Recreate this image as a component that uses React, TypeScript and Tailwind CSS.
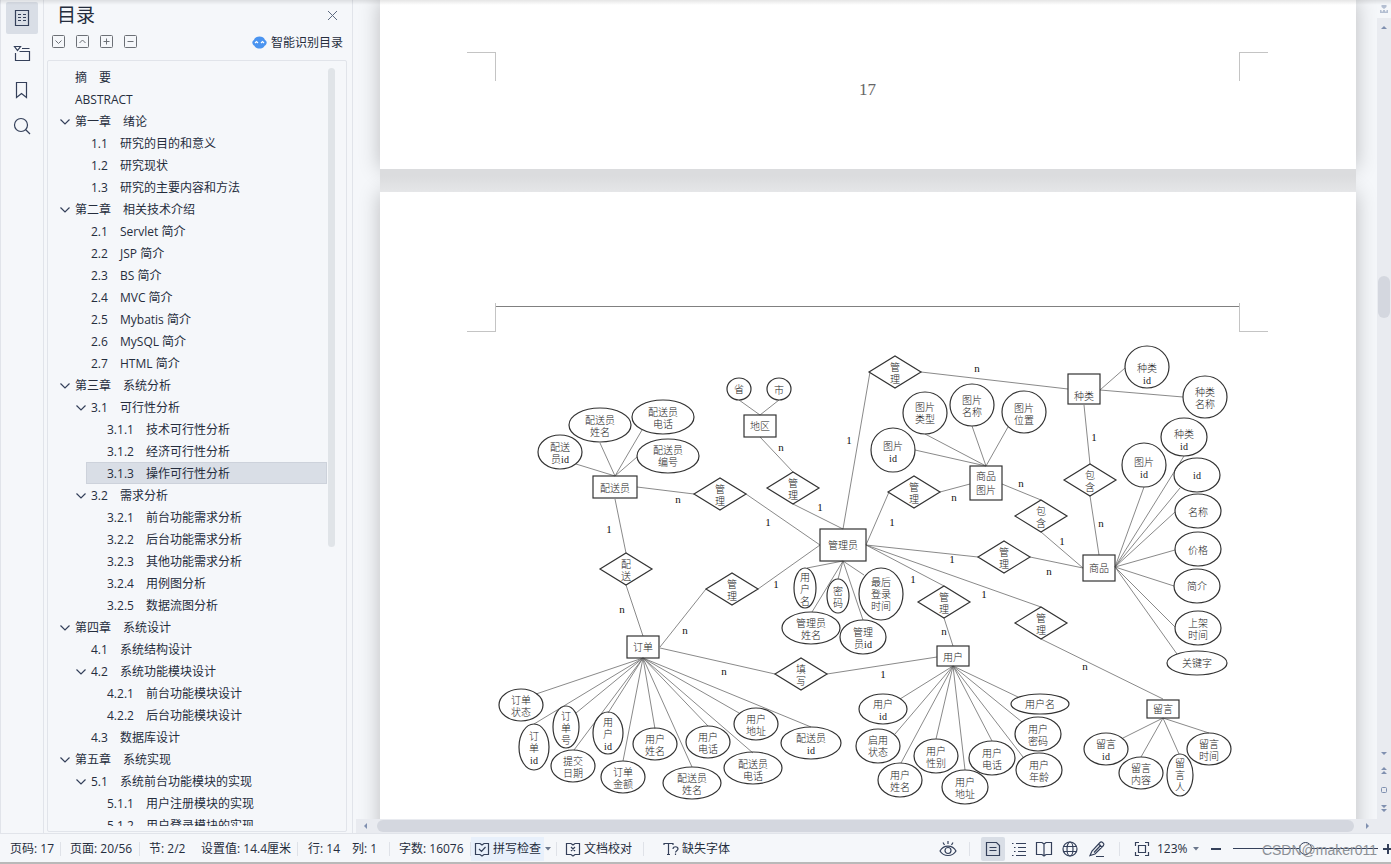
import { useState } from "react"
import type { ReactNode } from "react"

type TocItem = {
  level: number
  no: string
  title: string
  open?: boolean
}

type Shape = {
  kind: 'ellipse' | 'rect' | 'diamond'
  x: number
  y: number
  rx: number
  ry: number
  lines: string[]
  textY: number
}

const toc: TocItem[] = [
  { level: 0, no: '', title: '摘　要' },
  { level: 0, no: '', title: 'ABSTRACT' },
  { level: 0, no: '第一章', title: '绪论', open: true },
  { level: 1, no: '1.1', title: '研究的目的和意义' },
  { level: 1, no: '1.2', title: '研究现状' },
  { level: 1, no: '1.3', title: '研究的主要内容和方法' },
  { level: 0, no: '第二章', title: '相关技术介绍', open: true },
  { level: 1, no: '2.1', title: 'Servlet 简介' },
  { level: 1, no: '2.2', title: 'JSP 简介' },
  { level: 1, no: '2.3', title: 'BS 简介' },
  { level: 1, no: '2.4', title: 'MVC 简介' },
  { level: 1, no: '2.5', title: 'Mybatis 简介' },
  { level: 1, no: '2.6', title: 'MySQL 简介' },
  { level: 1, no: '2.7', title: 'HTML 简介' },
  { level: 0, no: '第三章', title: '系统分析', open: true },
  { level: 1, no: '3.1', title: '可行性分析', open: true },
  { level: 2, no: '3.1.1', title: '技术可行性分析' },
  { level: 2, no: '3.1.2', title: '经济可行性分析' },
  { level: 2, no: '3.1.3', title: '操作可行性分析' },
  { level: 1, no: '3.2', title: '需求分析', open: true },
  { level: 2, no: '3.2.1', title: '前台功能需求分析' },
  { level: 2, no: '3.2.2', title: '后台功能需求分析' },
  { level: 2, no: '3.2.3', title: '其他功能需求分析' },
  { level: 2, no: '3.2.4', title: '用例图分析' },
  { level: 2, no: '3.2.5', title: '数据流图分析' },
  { level: 0, no: '第四章', title: '系统设计', open: true },
  { level: 1, no: '4.1', title: '系统结构设计' },
  { level: 1, no: '4.2', title: '系统功能模块设计', open: true },
  { level: 2, no: '4.2.1', title: '前台功能模块设计' },
  { level: 2, no: '4.2.2', title: '后台功能模块设计' },
  { level: 1, no: '4.3', title: '数据库设计' },
  { level: 0, no: '第五章', title: '系统实现', open: true },
  { level: 1, no: '5.1', title: '系统前台功能模块的实现', open: true },
  { level: 2, no: '5.1.1', title: '用户注册模块的实现' },
  { level: 2, no: '5.1.2', title: '用户登录模块的实现' },
]

const indent = ['ml-[6px]', 'ml-[22px]', 'ml-[38px]']
const numberWidth = ['w-[48px]', 'w-[29px]', 'w-[39px]']

function el(x: number, y: number, rx: number, ry: number, text: string, textY: number): Shape {
  return { kind: 'ellipse', x, y, rx, ry, lines: text.split('/'), textY }
}

function box(x: number, y: number, rx: number, ry: number, text: string, textY: number): Shape {
  return { kind: 'rect', x, y, rx, ry, lines: text.split('/'), textY }
}

function dia(x: number, y: number, text: string): Shape {
  return { kind: 'diamond', x, y, rx: 26, ry: 16, lines: text.split('/'), textY: y - 5 }
}

const shapes: Shape[] = [
  // 配送员
  el(560, 452, 22, 17, '配送/员id', 447),
  el(600, 425, 31, 17, '配送员/姓名', 420),
  el(663, 417, 31, 17, '配送员/电话', 412),
  el(668, 456, 31, 17, '配送员/编号', 450),
  box(615, 487, 22, 11, '配送员', 488),
  // 地区
  el(739, 389, 12, 11, '省', 389),
  el(779, 389, 12, 11, '市', 390),
  box(760, 426, 16, 11, '地区', 426),
  // 商品图片
  el(925, 413, 22, 21, '图片/类型', 407),
  el(972, 405, 22, 21, '图片/名称', 400),
  el(1024, 412, 22, 21, '图片/位置', 408),
  el(893, 450, 22, 22, '图片/id', 446),
  box(986, 483, 16, 17, '商品/图片', 476),
  // 种类
  el(1147, 367, 22, 21, '种类/id', 368),
  el(1205, 397, 22, 21, '种类/名称', 392),
  box(1084, 389, 16, 15, '种类', 396),
  // 商品
  el(1184, 437, 23, 19, '种类/id', 434),
  el(1144, 465, 22, 22, '图片/id', 462),
  el(1197, 475, 23, 17, 'id', 475),
  el(1198, 511, 23, 17, '名称', 512),
  el(1198, 549, 23, 17, '价格', 550),
  el(1197, 586, 23, 17, '简介', 586),
  el(1198, 628, 23, 17, '上架/时间', 623),
  el(1197, 663, 30, 12, '关键字', 663),
  box(1099, 568, 16, 13, '商品', 568),
  // 管理员
  box(843, 545, 23, 16, '管理员', 545),
  el(805, 588, 11, 20, '用/户/名', 577),
  el(838, 596, 11, 17, '密/码', 591),
  el(881, 594, 22, 26, '最后/登录/时间', 582),
  el(811, 628, 29, 16, '管理员/姓名', 623),
  el(863, 637, 23, 17, '管理/员id', 632),
  // 订单
  box(643, 647, 16, 11, '订单', 647),
  el(521, 705, 22, 16, '订单/状态', 700),
  el(534, 747, 15, 23, '订/单/id', 736),
  el(566, 727, 13, 21, '订/单/号', 716),
  el(573, 766, 22, 16, '提交/日期', 761),
  el(608, 733, 15, 21, '用/户/id', 722),
  el(623, 777, 22, 16, '订单/金额', 772),
  el(655, 744, 22, 16, '用户/姓名', 739),
  el(692, 783, 29, 16, '配送员/姓名', 778),
  el(708, 742, 22, 16, '用户/电话', 737),
  el(753, 768, 29, 16, '配送员/电话', 764),
  el(756, 724, 22, 16, '用户/地址', 719),
  el(811, 743, 30, 16, '配送员/id', 738),
  // 用户
  box(953, 656, 16, 10, '用户', 657),
  el(883, 709, 24, 15, '用户/id', 704),
  el(878, 746, 22, 17, '启用/状态', 740),
  el(900, 780, 22, 17, '用户/姓名', 775),
  el(936, 756, 22, 17, '用户/性别', 751),
  el(965, 787, 23, 17, '用户/地址', 782),
  el(992, 758, 23, 17, '用户/电话', 753),
  el(1040, 704, 29, 10, '用户名', 704),
  el(1038, 734, 23, 17, '用户/密码', 729),
  el(1039, 770, 23, 17, '用户/年龄', 765),
  // 留言
  box(1163, 709, 16, 9, '留言', 709),
  el(1106, 749, 22, 16, '留言/id', 744),
  el(1141, 773, 22, 16, '留言/内容', 768),
  el(1180, 775, 13, 21, '留/言/人', 763),
  el(1209, 749, 22, 16, '留言/时间', 744),
  // 联系
  dia(895, 372, '管/理'),
  dia(720, 494, '管/理'),
  dia(793, 488, '管/理'),
  dia(914, 492, '管/理'),
  dia(1041, 516, '包/含'),
  dia(1090, 480, '包/含'),
  dia(1004, 557, '管/理'),
  dia(944, 602, '管/理'),
  dia(1041, 623, '管/理'),
  dia(732, 589, '管/理'),
  dia(626, 569, '配/送'),
  dia(801, 674, '填/写'),
]

// x1, y1, x2, y2
const links = [
  [576, 464, 615, 476], [600, 443, 615, 476], [642, 430, 615, 476], [637, 457, 615, 476],
  [739, 400, 760, 415], [779, 400, 760, 415], [760, 437, 793, 472], [793, 504, 843, 529],
  [637, 487, 694, 494], [615, 499, 626, 553], [746, 494, 820, 545], [626, 585, 643, 636],
  [870, 372, 843, 529], [921, 372, 1068, 389],
  [925, 434, 986, 466], [972, 426, 986, 466], [1008, 427, 986, 466], [915, 450, 986, 466],
  [940, 492, 970, 484], [889, 492, 866, 545], [1002, 484, 1041, 500], [1041, 532, 1083, 568],
  [1084, 405, 1090, 464], [1090, 496, 1099, 555], [1100, 390, 1125, 368], [1100, 390, 1183, 397],
  [1115, 567, 1144, 487], [1115, 567, 1184, 456], [1115, 567, 1180, 488], [1115, 567, 1175, 512],
  [1115, 567, 1175, 550], [1115, 567, 1174, 586], [1115, 567, 1175, 627], [1115, 567, 1177, 654],
  [866, 545, 978, 557], [1030, 557, 1083, 568], [866, 545, 944, 586], [866, 545, 1041, 607],
  [944, 618, 953, 646], [1041, 639, 1163, 699],
  [843, 561, 807, 568], [843, 561, 812, 612], [843, 561, 838, 579], [843, 561, 863, 620], [843, 561, 864, 575],
  [820, 545, 758, 589], [706, 589, 660, 647], [660, 648, 775, 674], [827, 674, 937, 657],
  [643, 658, 536, 694], [643, 658, 534, 724], [643, 658, 576, 713], [643, 658, 574, 750],
  [643, 658, 608, 713], [643, 658, 623, 761], [643, 658, 655, 729], [643, 658, 692, 767],
  [643, 658, 708, 726], [643, 658, 753, 753], [643, 658, 739, 713], [643, 658, 811, 727],
  [953, 666, 900, 699], [953, 666, 895, 734], [953, 666, 901, 763], [953, 666, 936, 739],
  [953, 666, 965, 770], [953, 666, 992, 741], [953, 666, 1023, 757], [953, 666, 1022, 722],
  [953, 666, 1018, 697],
  [1163, 718, 1123, 738], [1163, 718, 1141, 757], [1163, 718, 1179, 754], [1163, 718, 1209, 733],
]

const cardinals: [string, number, number][] = [
  ['n', 678, 500], ['1', 768, 523], ['1', 609, 530], ['n', 781, 448], ['1', 820, 508],
  ['1', 849, 441], ['n', 977, 369], ['1', 892, 523], ['n', 954, 498], ['n', 1021, 484],
  ['1', 1094, 438], ['n', 1101, 524], ['1', 1062, 542], ['n', 1049, 572], ['n', 1085, 667],
  ['1', 952, 560], ['1', 913, 580], ['1', 984, 595], ['n', 944, 632], ['1', 883, 675],
  ['1', 776, 585], ['n', 622, 610], ['n', 685, 631], ['n', 724, 672],
]

function ErDiagram() {
  return (
    <svg viewBox="380 332 976 520" className="block w-full font-['Liberation_Serif','Noto_Sans_CJK_SC',serif]" role="img" aria-label="E-R图">
      <g stroke="#6b6b6b" strokeWidth="0.8">
        {links.map(([x1, y1, x2, y2], i) => <line key={i} x1={x1} y1={y1} x2={x2} y2={y2} />)}
      </g>
      <g fill="none" stroke="#333" strokeWidth="1.2">
        {shapes.map((s, i) => {
          if (s.kind === 'ellipse') {
            return <ellipse key={i} cx={s.x} cy={s.y} rx={s.rx} ry={s.ry} />
          }
          if (s.kind === 'rect') {
            return <rect key={i} x={s.x - s.rx} y={s.y - s.ry} width={s.rx * 2} height={s.ry * 2} />
          }
          return <path key={i} d={`M${s.x - s.rx} ${s.y}L${s.x} ${s.y - s.ry}L${s.x + s.rx} ${s.y}L${s.x} ${s.y + s.ry}Z`} />
        })}
      </g>
      <g fill="#222" fontSize="10" fontWeight="300" textAnchor="middle">
        {shapes.map((s) => s.lines.map((line, n) => (
          <text key={`${s.x}-${s.y}-${n}`} x={s.x} y={s.textY + n * (s.kind === 'rect' ? 14 : 12) + 4}>{line}</text>
        )))}
      </g>
      <g fill="#111" fontSize="11" textAnchor="middle">
        {cardinals.map(([label, x, y]) => <text key={`${x}-${y}`} x={x} y={y + 3}>{label}</text>)}
      </g>
    </svg>
  )
}

function Icon({ children, size = 18 }: { children: ReactNode, size?: number }) {
  return (
    <svg width={size} height={size} viewBox={`0 0 ${size} ${size}`} fill="none" stroke="#34405a" strokeWidth="1.2" className="shrink-0" aria-hidden="true">
      {children}
    </svg>
  )
}

function Triangle({ d }: { d: string }) {
  return (
    <svg width="8" height="10" viewBox="0 0 8 10" fill="#8090b0" className="shrink-0" aria-hidden="true">
      <path d={d} />
    </svg>
  )
}

function SideRail() {
  return (
    <nav className="flex w-11 shrink-0 flex-col items-center gap-1 border-x border-[#e1e4ea] pt-[2px]">
      <button type="button" aria-label="目录" className="flex size-8 items-center justify-center rounded-xs bg-[#d9dee6]">
        <Icon>
          <path d="M2.500 1.500h13v15h-13z" />
          <path d="M5 5.500h3M10 5.500h3M5 8.500h3M10 8.500h3M5 11.500h3M10 11.500h3" />
        </Icon>
      </button>
      <button type="button" aria-label="章节" className="flex size-8 items-center justify-center">
        <Icon>
          <path d="M1.500 1.500h6l-3 4zM9 3.500h7.500M2.500 8v7.500h14v-9h-10" />
        </Icon>
      </button>
      <button type="button" aria-label="书签" className="flex size-8 items-center justify-center">
        <Icon>
          <path d="M3.500 1.500h10v15l-5-4-5 4z" />
        </Icon>
      </button>
      <button type="button" aria-label="查找" className="flex size-8 items-center justify-center">
        <Icon>
          <circle cx="8" cy="8" r="6.500" />
          <path d="M12.500 12.500l4.500 4.500" />
        </Icon>
      </button>
    </nav>
  )
}

function ToolButton({ label, d }: { label: string, d: string }) {
  return (
    <button type="button" aria-label={label}>
      <svg width="14" height="14" viewBox="0 0 14 14" fill="none" stroke="#6c7076" aria-hidden="true">
        <rect x="0.500" y="0.500" width="12" height="12" rx="1" />
        <path d={d} />
      </svg>
    </button>
  )
}

function Outline() {
  const [selected, setSelected] = useState('3.1.3')

  return (
    <aside className="flex w-[309px] shrink-0 flex-col border-r border-[#e1e4ea] pr-[5px] pl-[3px]">
      <div className="flex h-[30px] items-center justify-between pr-[9px] pl-[10px]">
        <h2 className="text-[19px] leading-[30px]">目录</h2>
        <button type="button" aria-label="关闭">
          <svg width="11" height="11" viewBox="0 0 11 11" stroke="#5d6a80" aria-hidden="true">
            <path d="M1 1l9 9M10 1l-9 9" />
          </svg>
        </button>
      </div>
      <div className="flex h-[30px] items-center gap-[10px] pr-[4px] pb-[6px] pl-[5px]">
        <ToolButton label="展开" d="M3.500 5.500l3 3 3-3" />
        <ToolButton label="收起" d="M3.500 8l3-3 3 3" />
        <ToolButton label="增加级别" d="M6.500 3.500v6M3.500 6.500h6" />
        <ToolButton label="降低级别" d="M3.500 6.500h6" />
        <button type="button" className="ml-auto flex items-center gap-1 text-xs">
          <svg width="15" height="13" viewBox="0 0 15 13" aria-hidden="true">
            <path d="M2 4C3 1 5 .5 7.500 .5S12 1 13 4c1.500 1 2 2 1.500 3.500S13 9.500 12.500 10c-1 2-3 2.500-5 2.500s-4-.5-5-2.500C2 9.500 1 9 .5 7.500S.5 5 2 4z" fill="#4a94f0" />
            <path d="M3 7l1.500-1.500L6 7M9 7l1.500-1.500L12 7" fill="none" stroke="#fff" strokeWidth="1.200" />
          </svg>
          <span className="pt-[2px]">智能识别目录</span>
        </button>
      </div>
      <div className="mb-px flex min-h-0 flex-1 rounded-xs border border-[#e1e4ea] py-[5px] pr-[11px]">
        <ul className="min-w-0 flex-1 overflow-hidden text-xs">
          {toc.map((item, i) => (
            <li key={i} className={indent[item.level]}>
              <button
                type="button"
                onClick={() => setSelected(item.no)}
                className={`flex h-[22px] w-full items-center border pt-[2px] whitespace-nowrap ${item.no !== '' && item.no === selected ? 'border-[#cdd2db] bg-[#d9dee6]' : 'border-transparent'}`}
              >
                <span className="w-5 shrink-0 pl-[5px]">
                  {item.open && (
                    <svg width="10" height="6" viewBox="0 0 10 6" fill="none" stroke="#34405a" strokeWidth="1.200" aria-hidden="true">
                      <path d="M.5 .5l4.500 4.500 4.500-4.500" />
                    </svg>
                  )}
                </span>
                {item.no && <span className={`shrink-0 text-left ${numberWidth[item.level]}`}>{item.no}</span>}
                <span>{item.title}</span>
              </button>
            </li>
          ))}
        </ul>
        <div className="mt-[2px] ml-px h-[63%] w-[7px] rounded-full bg-[#e0e4e8]" />
      </div>
    </aside>
  )
}

function VerticalScroll() {
  return (
    <div className="flex w-[14px] shrink-0 flex-col items-center bg-[#e9ebf0]">
      <div className="flex h-[18px] w-full items-center justify-center bg-[#f5f7fa]">
        <svg width="8" height="9" viewBox="0 0 8 9" fill="#b4bfd2" aria-hidden="true">
          <path d="M1.500 0h5v2l-2.500 2-2.500-2zM0 5h1.500v1.500h1.500V5h2v1.500h1.500V5H8v3H0z" />
        </svg>
      </div>
      <div className="flex h-[18px] items-center"><Triangle d="M4 4l3 3H1z" /></div>
      <div className="flex-[240]" />
      <div className="h-[42px] w-3 rounded-full bg-[#d4d7df]" />
      <div className="flex-[430]" />
      <div className="flex h-[85px] flex-col items-center justify-between pb-[20px]">
        <Triangle d="M4 7l3-3H1z" />
        <Triangle d="M4 0l3 3H1zM4 4l3 3H1z" />
        <svg width="8" height="8" viewBox="0 0 8 8" fill="none" stroke="#8090b0" aria-hidden="true"><rect x="1.500" y="1.500" width="5" height="5" rx="1" /></svg>
        <Triangle d="M4 5l3-3H1zM4 9l3-3H1z" />
      </div>
    </div>
  )
}

function DocumentView() {
  return (
    <main className="flex min-w-0 flex-1">
      <div className="flex min-w-0 flex-1 flex-col">
        <div className="min-h-0 flex-1 overflow-hidden pr-[21px] pl-[27px]">
          <section className="h-[169px] shadow-[0_0_20px_rgba(0,0,0,0.24)]">
            <div className="relative z-10 h-full bg-white pt-[52px] pr-[88px] pl-[87px]">
              <div className="flex justify-between">
                <div className="size-[29px] border-t border-r border-[#c4c4c4]" />
                <div className="size-[29px] border-t border-l border-[#c4c4c4]" />
              </div>
              <p className="text-center font-['Liberation_Serif',serif] text-[17px] leading-[18px] text-[#666]">17</p>
            </div>
          </section>
          <div className="relative z-10 h-[23px] bg-linear-to-b from-[#dbdcde] from-30% to-[#e5e6e8]" />
          <section className="shadow-[0_0_20px_rgba(0,0,0,0.24)]">
            <div className="relative z-10 bg-white pt-[111px]">
              <div className="flex pr-[88px] pl-[87px]">
                <div className="size-[29px] border-r border-b border-[#c4c4c4]" />
                <div className="mt-[3px] flex-1 border-t border-[#808080]" />
                <div className="size-[29px] border-b border-l border-[#c4c4c4]" />
              </div>
              <ErDiagram />
            </div>
          </section>
        </div>
        <div className="ml-[3px] flex h-[14px] shrink-0 items-center bg-[#e9ebf0]">
          <div className="flex w-[21px] justify-center"><Triangle d="M4 2v6L1 5z" /></div>
          <div className="h-3 flex-1 rounded-full bg-[#d4d7df]" />
          <div className="flex w-[23px] justify-center"><Triangle d="M4 2v6l3-3z" /></div>
        </div>
      </div>
      <VerticalScroll />
    </main>
  )
}

function Separator() {
  return <div className="h-[14px] w-px shrink-0 bg-[#dfe2e8]" />
}

function Caret() {
  return (
    <svg width="6" height="4" viewBox="0 0 6 4" fill="#6b778c" className="shrink-0" aria-hidden="true">
      <path d="M0 0h6l-3 3.500z" />
    </svg>
  )
}

function StatusBar() {
  const [zoom, setZoom] = useState(50)

  return (
    <footer className="relative flex h-[31px] shrink-0 items-center border-t border-b-2 border-t-[#e1e4ea] border-b-[#b9b9b9] pt-px text-xs whitespace-nowrap">
      <span className="w-[60px] shrink-0 pl-[10px]">页码: 17</span>
      <Separator />
      <span className="w-[78px] shrink-0 pl-[9px]">页面: 20/56</span>
      <Separator />
      <span className="w-[61px] shrink-0 pl-[9px]">节: 2/2</span>
      <span className="w-[96px] shrink-0">设置值: 14.4厘米</span>
      <Separator />
      <span className="w-[54px] shrink-0 pl-[10px]">行: 14</span>
      <span className="w-[37px] shrink-0">列: 1</span>
      <Separator />
      <span className="w-[80px] shrink-0 pl-[9px]">字数: 16076</span>
      <Separator />
      <button type="button" className="flex h-6 w-[73px] shrink-0 items-center gap-[3px] bg-[#e8f0fb] pl-[3px]">
        <Icon size={16}>
          <path d="M6 2.500H1.500v11H6l2 1.500 2-1.500h4.500v-11H10L8 4 6 2.500M5 8l2.500 2.500 4-4.500" />
        </Icon>
        拼写检查
      </button>
      <button type="button" aria-label="拼写检查选项" className="flex w-3 shrink-0 pl-px"><Caret /></button>
      <Separator />
      <button type="button" className="flex w-[86px] shrink-0 items-center gap-[3px] pl-[8px]">
        <Icon size={16}>
          <path d="M6 2.500H1.500v11H6l2 1.500 2-1.500h4.500v-11H10L8 4 6 2.500M6 6l4 4M10 6l-4 4" />
        </Icon>
        文档校对
      </button>
      <Separator />
      <button type="button" className="flex shrink-0 items-center gap-[3px] pl-[19px]">
        <Icon size={16}>
          <path d="M1 4V2.500h9V4M5.500 2.500v11M4 13.500h3M10 8c0-3 5-3 5 0 0 1.500-2.500 2-2.500 3.500M12.500 12.500V14" />
        </Icon>
        缺失字体
      </button>

      <div className="ml-auto flex shrink-0 items-center">
        <button type="button" aria-label="护眼模式" className="mr-[12px]">
          <Icon>
            <path d="M1 11c3.500-6.500 12.500-6.500 16 0-3.500 6-12.500 6-16 0zM9 1v3M4 2.500l1.500 2.500M14 2.500L12.500 5" />
            <circle cx="9" cy="10.500" r="3" />
          </Icon>
        </button>
        <Separator />
        <button type="button" aria-label="页面视图" className="ml-[11px] flex size-6 items-center justify-center rounded-xs bg-[#d9dee6]">
          <Icon>
            <path d="M2.500 2.500h10l3 3v10h-13zM5.500 7.500h7M5.500 10.500h7" />
          </Icon>
        </button>
        <button type="button" aria-label="大纲" className="ml-[5px]">
          <Icon>
            <path d="M2 3.500h1.500M6 3.500h10M4 7.500h1.500M8 7.500h8M4 11.500h1.500M8 11.500h8M2 15.500h1.500M6 15.500h10" />
          </Icon>
        </button>
        <button type="button" aria-label="阅读版式" className="ml-[7px]">
          <Icon>
            <path d="M9 4L7 2.500H1.500v12H7l2 1.500 2-1.500h5.500v-12H11L9 4v12" />
          </Icon>
        </button>
        <button type="button" aria-label="Web版式" className="ml-[8px]">
          <Icon>
            <circle cx="9" cy="9" r="7" />
            <ellipse cx="9" cy="9" rx="3" ry="7" />
            <path d="M2.500 6.500h13M2.500 11.500h13" />
          </Icon>
        </button>
        <button type="button" aria-label="写作模式" className="ml-[9px]">
          <Icon>
            <path d="M2 15.500L4 11l8-8.500c1.500-1.500 5 1 3.500 3l-8.500 8.500zM10.500 4l3.500 3.500M13 5l-7 7.500M8 16.500h8" />
          </Icon>
        </button>
        <div className="ml-[13px] flex"><Separator /></div>
        <button type="button" aria-label="最佳显示比例" className="ml-[14px]">
          <Icon size={16}>
            <path d="M1.500 5V1.500H5M11 1.500h3.500V5M14.500 11v3.500H11M5 14.500H1.500V11M4.500 4.500h7v7h-7z" />
          </Icon>
        </button>
        <button type="button" className="ml-[7px] flex w-[44px] items-center gap-[5px]">
          123%<Caret />
        </button>
        <button type="button" aria-label="缩小" className="ml-[10px] h-6 w-[12px]">
          <span className="block h-[2px] w-[10px] bg-[#34405a]" />
        </button>
        <input
          type="range"
          aria-label="显示比例"
          value={zoom}
          onChange={event => setZoom(Number(event.target.value))}
          className="ml-[10px] h-[14px] w-[145px] appearance-none bg-transparent [&::-webkit-slider-runnable-track]:h-px [&::-webkit-slider-runnable-track]:bg-[#34405a] [&::-webkit-slider-thumb]:-mt-[6px] [&::-webkit-slider-thumb]:size-[13px] [&::-webkit-slider-thumb]:appearance-none [&::-webkit-slider-thumb]:rounded-full [&::-webkit-slider-thumb]:border [&::-webkit-slider-thumb]:border-[#34405a] [&::-webkit-slider-thumb]:bg-[#f5f7fa]"
        />
        <button type="button" aria-label="放大" className="ml-[5px] w-2 overflow-hidden">
          <svg width="10" height="10" viewBox="0 0 10 10" stroke="#34405a" strokeWidth="2" aria-hidden="true">
            <path d="M0 5h10M5 0v10" />
          </svg>
        </button>
      </div>
      <span className="pointer-events-none absolute top-[8px] right-[14px] font-['Liberation_Sans',sans-serif] text-sm leading-4 text-[#8c9096]">CSDN@maker011</span>
    </footer>
  )
}

export default function App() {
  return (
    <div className="relative flex h-screen flex-col overflow-hidden bg-[#f5f7fa] font-['Open_Sans','Noto_Sans_CJK_SC',sans-serif] text-[#252d3d]">
      <div className="flex min-h-0 flex-1">
        <SideRail />
        <Outline />
        <DocumentView />
      </div>
      <StatusBar />
      <div className="pointer-events-none absolute inset-x-0 top-0 z-20 h-[5px] bg-linear-to-b from-black/10 to-transparent" />
    </div>
  )
}
